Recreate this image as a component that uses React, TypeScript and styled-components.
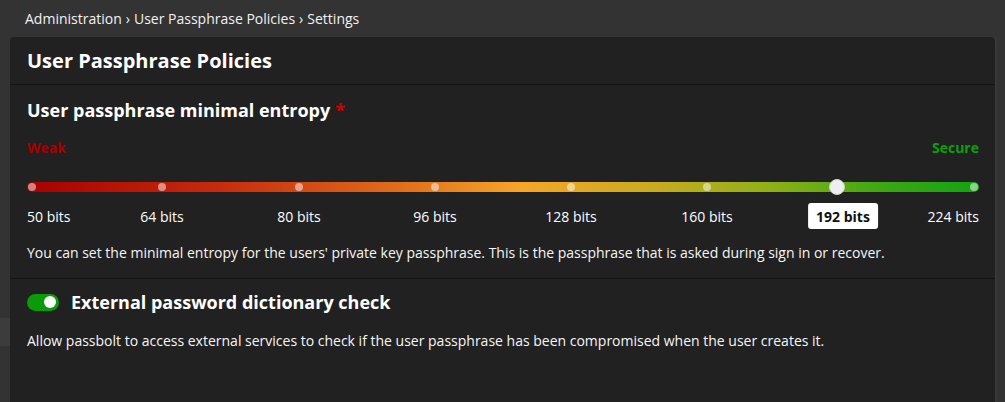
import React from "react";
import styled, { createGlobalStyle } from "styled-components";

const GlobalStyle = createGlobalStyle`
  html, body { margin: 0; padding: 0; background: #333333; }
  body { font-family: "Open Sans", "Liberation Sans", sans-serif; color: #ffffff; overflow: hidden; }
  * { box-sizing: border-box; }
`;

const Page = styled.div`
  width: 1005px;
  height: 402px;
  display: flex;
  flex-direction: column;
  background: #333333;
`;

const Breadcrumb = styled.div`
  height: 37px;
  display: flex;
  align-items: center;
  padding-left: 25px;
  font-size: 14px;
  line-height: 19px;
  color: #f2f2f2;
  gap: 4px;
`;

const Body = styled.div`
  flex: 1;
  display: flex;
`;

const Sidebar = styled.div`
  width: 10px;
  flex: none;
  padding-top: 281px;
`;

const SidebarItem = styled.div`
  height: 28px;
  background: #3c3c3c;
`;

const Panel = styled.div`
  width: 985px;
  flex: none;
  background: #212121;
  border-radius: 4px 4px 0 0;
  box-shadow: 2px 0 0 #393939;
  display: flex;
  flex-direction: column;
`;

const PanelHeader = styled.div`
  height: 48px;
  display: flex;
  align-items: center;
  padding: 0 17px 1px;
  border-bottom: 1px solid #141414;
  font-size: 20px;
  font-weight: 700;
  color: #ffffff;
`;

const Section = styled.div<{ $top: number; $bottom: number; $border?: boolean }>`
  padding: ${(p) => p.$top}px 16px ${(p) => p.$bottom}px 17px;
  border-bottom: ${(p) => (p.$border ? "1px solid #141414" : "none")};
`;

const SectionTitle = styled.div`
  font-size: 18px;
  font-weight: 700;
  line-height: 24px;
  display: flex;
  align-items: center;
  gap: 12px;
`;

const Required = styled.span`
  color: #d40000;
  margin-left: 5px;
`;

const StrengthRow = styled.div`
  margin-top: 16px;
  display: flex;
  justify-content: space-between;
  font-size: 14px;
  font-weight: 700;
  line-height: 19px;
`;

const Strength = styled.span<{ $color: string }>`
  color: ${(p) => p.$color};
`;

const SliderArea = styled.div`
  position: relative;
  margin-top: 20px;
  height: 20px;
  width: 952px;
`;

const Track = styled.div`
  position: absolute;
  left: 0;
  right: 0;
  top: 5px;
  height: 10px;
  border-radius: 5px;
  background: linear-gradient(
    90deg,
    #a80000 0%,
    #c72a0c 20%,
    #e2701c 40%,
    #f7a626 52%,
    #c8ab1e 66%,
    #8fb016 78%,
    #3aa812 90%,
    #12a312 100%
  );
`;

const Dot = styled.span`
  position: absolute;
  top: 6px;
  width: 8px;
  height: 8px;
  margin-left: -4px;
  border-radius: 50%;
  background: rgba(255, 255, 255, 0.5);
`;

const Thumb = styled.span`
  position: absolute;
  top: 2px;
  width: 16px;
  height: 16px;
  margin-left: -8px;
  border-radius: 50%;
  background: #eeeeee;
  border: 1px solid #d0d0d0;
`;

const Marks = styled.div`
  position: relative;
  margin-top: 6px;
  height: 26px;
  width: 952px;
`;

const Mark = styled.span<{ $align: "start" | "center" | "end"; $active?: boolean }>`
  position: absolute;
  top: 0;
  height: 26px;
  display: flex;
  align-items: center;
  white-space: nowrap;
  font-size: 14px;
  line-height: 19px;
  transform: ${(p) =>
    p.$align === "center" ? "translateX(-50%)" : p.$align === "end" ? "translateX(-100%)" : "none"};
  ${(p) =>
    p.$active
      ? `background: #ffffff; color: #111111; font-weight: 700; padding: 0 8px; border-radius: 3px;`
      : `color: #ffffff;`}
`;

const Description = styled.p<{ $top: number }>`
  margin: ${(p) => p.$top}px 0 0;
  font-size: 14px;
  line-height: 19px;
  color: #f6f6f6;
`;

const Toggle = styled.span<{ $on: boolean }>`
  display: inline-flex;
  align-items: center;
  justify-content: ${(p) => (p.$on ? "flex-end" : "flex-start")};
  width: 32px;
  height: 17px;
  padding: 0 3px;
  border-radius: 9px;
  background: ${(p) => (p.$on ? "#0a9a0a" : "#666")};
  flex: none;
`;

const Knob = styled.span`
  width: 12px;
  height: 12px;
  border-radius: 50%;
  background: #ffffff;
`;

const dotPositions = [5, 135, 272, 408, 544, 680, 947];
const thumbPos = 810;
const marks: { label: string; x: number; align: "start" | "center" | "end"; active?: boolean }[] = [
  { label: "50 bits", x: 0, align: "start" },
  { label: "64 bits", x: 135, align: "center" },
  { label: "80 bits", x: 272, align: "center" },
  { label: "96 bits", x: 408, align: "center" },
  { label: "128 bits", x: 544, align: "center" },
  { label: "160 bits", x: 680, align: "center" },
  { label: "192 bits", x: 816, align: "center", active: true },
  { label: "224 bits", x: 952, align: "end" },
];

export default function App() {
  return (
    <>
      <GlobalStyle />
      <Page>
        <Breadcrumb>
          <span>Administration</span>
          <span>›</span>
          <span>User Passphrase Policies</span>
          <span>›</span>
          <span>Settings</span>
        </Breadcrumb>
        <Body>
          <Sidebar>
            <SidebarItem />
          </Sidebar>
          <Panel>
            <PanelHeader>User Passphrase Policies</PanelHeader>
            <Section $top={13} $bottom={16} $border>
              <SectionTitle>
                <span>
                  User passphrase minimal entropy<Required>*</Required>
                </span>
              </SectionTitle>
              <StrengthRow>
                <Strength $color="#a80000">Weak</Strength>
                <Strength $color="#0aa00a">Secure</Strength>
              </StrengthRow>
              <SliderArea>
                <Track />
                {dotPositions.map((x) => (
                  <Dot key={x} style={{ left: x }} />
                ))}
                <Thumb style={{ left: thumbPos }} />
              </SliderArea>
              <Marks>
                {marks.map((m) => (
                  <Mark key={m.label} $align={m.align} $active={m.active} style={{ left: m.x }}>
                    {m.label}
                  </Mark>
                ))}
              </Marks>
              <Description $top={14}>
                You can set the minimal entropy for the users' private key passphrase. This is the passphrase that
                is asked during sign in or recover.
              </Description>
            </Section>
            <Section $top={11} $bottom={0}>
              <SectionTitle>
                <Toggle $on>
                  <Knob />
                </Toggle>
                <span>External password dictionary check</span>
              </SectionTitle>
              <Description $top={17}>
                Allow passbolt to access external services to check if the user passphrase has been compromised
                when the user creates it.
              </Description>
            </Section>
          </Panel>
        </Body>
      </Page>
    </>
  );
}
